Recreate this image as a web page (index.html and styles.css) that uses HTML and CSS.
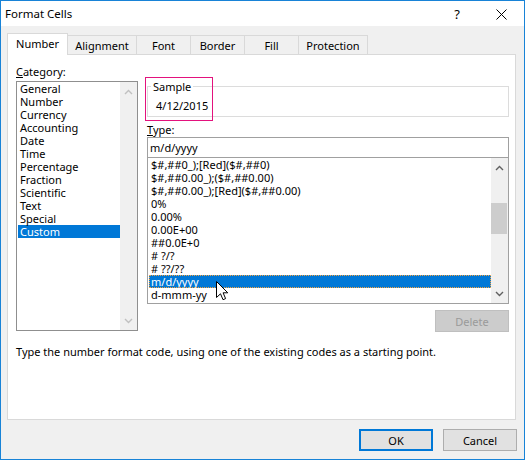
FILE: index.html
```html
<!DOCTYPE html>
<html>
<head>
<meta charset="utf-8">
<title>Format Cells</title>
<link rel="stylesheet" href="styles.css">
</head>
<body>
<div class="window">
  <div class="titlebar">
    <span class="title">Format Cells</span>
    <span class="caption-btn help">?</span>
    <span class="caption-btn close"><svg width="11" height="11" viewBox="0 0 11 11"><path d="M0.5 0.5 L10.5 10.5 M10.5 0.5 L0.5 10.5" stroke="#000" stroke-width="1" fill="none"/></svg></span>
  </div>
  <div class="client">
    <div class="tabs">
      <div class="tab active t-number">Number</div>
      <div class="tab t-align">Alignment</div>
      <div class="tab t-font">Font</div>
      <div class="tab t-border">Border</div>
      <div class="tab t-fill">Fill</div>
      <div class="tab t-prot">Protection</div>
    </div>
    <div class="panel">
      <div class="columns">
        <div class="col-left">
          <div class="label"><u>C</u>ategory:</div>
          <div class="listbox cat">
            <ul class="items">
              <li>General</li>
              <li>Number</li>
              <li>Currency</li>
              <li>Accounting</li>
              <li>Date</li>
              <li>Time</li>
              <li>Percentage</li>
              <li>Fraction</li>
              <li>Scientific</li>
              <li>Text</li>
              <li>Special</li>
              <li class="selected">Custom</li>
            </ul>
            <div class="vscroll disabled">
              <div class="arrow up"><svg width="9" height="6" viewBox="0 0 9 6"><path d="M1 5 L4.5 1.5 L8 5" stroke="currentColor" stroke-width="1.4" fill="none"/></svg></div>
              <div class="spacer"></div>
              <div class="arrow down"><svg width="9" height="6" viewBox="0 0 9 6"><path d="M1 1 L4.5 4.5 L8 1" stroke="currentColor" stroke-width="1.4" fill="none"/></svg></div>
            </div>
          </div>
        </div>
        <div class="col-right">
          <div class="sample-wrap">
            <fieldset class="sample">
              <legend>Sample</legend>
              <div class="sample-value">4/12/2015</div>
            </fieldset>
            <div class="highlight"></div>
          </div>
          <div class="label type-label"><u>T</u>ype:</div>
          <div class="textbox">m/d/yyyy</div>
          <div class="listbox fmt">
            <ul class="items">
              <li>$#,##0_);[Red]($#,##0)</li>
              <li>$#,##0.00_);($#,##0.00)</li>
              <li>$#,##0.00_);[Red]($#,##0.00)</li>
              <li>0%</li>
              <li>0.00%</li>
              <li>0.00E+00</li>
              <li>##0.0E+0</li>
              <li># ?/?</li>
              <li># ??/??</li>
              <li class="selected focus">m/d/yyyy</li>
              <li>d-mmm-yy</li>
            </ul>
            <div class="vscroll">
              <div class="arrow up"><svg width="9" height="6" viewBox="0 0 9 6"><path d="M1 5 L4.5 1.5 L8 5" stroke="currentColor" stroke-width="1.4" fill="none"/></svg></div>
              <div class="thumb"></div>
              <div class="spacer"></div>
              <div class="arrow down"><svg width="9" height="6" viewBox="0 0 9 6"><path d="M1 1 L4.5 4.5 L8 1" stroke="currentColor" stroke-width="1.4" fill="none"/></svg></div>
            </div>
            <svg class="cursor" width="13" height="20" viewBox="0 0 13 20"><path d="M0.5 0.5 L0.5 16.5 L4.5 12.8 L7 18.7 L9.6 17.6 L7.1 11.8 L11.8 11.8 Z" fill="#fff" stroke="#000" stroke-width="1" stroke-linejoin="miter"/></svg>
          </div>
          <div class="delete-row"><button class="btn delete" disabled>Delete</button></div>
        </div>
      </div>
      <p class="desc">Type the number format code, using one of the existing codes as a starting point.</p>
    </div>
    <div class="buttons">
      <button class="btn ok">OK</button>
      <button class="btn cancel">Cancel</button>
    </div>
  </div>
</div>
</body>
</html>
```

FILE: styles.css
```css
html, body {
  margin: 0;
  padding: 0;
  background: #ffffff;
}
body {
  font-family: "Noto Sans", "Open Sans", "DejaVu Sans", sans-serif;
  font-size: 11px;
  color: #000000;
}
.window {
  width: 525px;
  height: 460px;
  box-sizing: border-box;
  border: 1px solid #1883d7;
  background: #f0f0f0;
  display: flex;
  flex-direction: column;
}
.titlebar {
  flex: none;
  height: 25px;
  background: #ffffff;
  display: flex;
  align-items: center;
}
.title {
  flex: 1;
  margin-left: 4px;
  line-height: 25px;
  font-size: 11.5px;
}
.caption-btn {
  width: 46px;
  height: 25px;
  display: flex;
  align-items: center;
  justify-content: center;
}
.help {
  font-size: 13px;
  padding-left: 4px;
  box-sizing: border-box;
}
.close svg {
  display: block;
  margin-top: 2px;
}
.client {
  flex: 1;
  display: flex;
  flex-direction: column;
  padding: 7px 7px 0 6px;
}
.tabs {
  display: flex;
  align-items: flex-end;
  height: 21px;
  position: relative;
  z-index: 1;
}
.tab {
  height: 19px;
  box-sizing: border-box;
  border: 1px solid #d9d9d9;
  border-bottom: none;
  margin-left: -1px;
  background: #f0f0f0;
  display: flex;
  align-items: center;
  justify-content: center;
  padding-top: 1px;
}
.tab.active {
  height: 22px;
  margin-left: 0;
  margin-bottom: -1px;
  background: #ffffff;
  padding-top: 0;
  padding-bottom: 2px;
}
.t-number { width: 61px; }
.t-align { width: 70px; }
.t-font { width: 55px; }
.t-border { width: 55px; }
.t-fill { width: 55px; }
.t-prot { width: 70px; }
.panel {
  width: 509px;
  height: 366px;
  box-sizing: border-box;
  border: 1px solid #d9d9d9;
  background: #ffffff;
  padding: 9px 6px 0 8px;
}
.columns {
  display: flex;
  gap: 9px;
}
.col-left {
  width: 122px;
}
.col-right {
  width: 362px;
}
.label {
  height: 15px;
  line-height: 15px;
}
.listbox {
  box-sizing: border-box;
  border: 1px solid #8f8f8f;
  background: #ffffff;
  display: flex;
  position: relative;
}
.listbox.cat {
  margin-top: 2px;
  height: 250px;
}
.items {
  flex: 1;
  list-style: none;
  margin: 0;
  padding: 0 0 0 1px;
}
.items li {
  height: 13px;
  line-height: 13px;
  padding-left: 2px;
  white-space: nowrap;
}
.items li.selected {
  background: #0078d7;
  color: #ffffff;
}
.items li.focus {
  outline: 1px dotted #f4a340;
  outline-offset: -1px;
}
.vscroll {
  width: 17px;
  background: #f0f0f0;
  display: flex;
  flex-direction: column;
  color: #606060;
}
.vscroll.disabled {
  color: #c0c0c0;
}
.arrow {
  display: flex;
  justify-content: center;
  align-items: center;
}
.arrow svg {
  display: block;
}
.arrow.up {
  height: 20px;
}
.arrow.down {
  height: 18px;
}
.spacer {
  flex: 1;
}
.thumb {
  margin-top: 25px;
  height: 31px;
  width: 16px;
  background: #cdcdcd;
}
.sample-wrap {
  position: relative;
  margin-top: 16px;
}
.sample {
  margin: 0;
  padding: 0 0 3px 3px;
  border: 1px solid #dcdcdc;
  min-width: 0;
}
.sample legend {
  padding: 0 2px;
  line-height: 13px;
}
.sample-value {
  margin-top: 5px;
  padding-left: 5px;
  line-height: 15px;
}
.highlight {
  position: absolute;
  left: -2px;
  top: -3px;
  width: 68px;
  height: 44px;
  box-sizing: border-box;
  border: 1px solid #e3127d;
}
.type-label {
  margin-top: 5px;
}
.textbox {
  height: 21px;
  box-sizing: border-box;
  border: 1px solid #a0a0a0;
  padding-left: 2px;
  line-height: 19px;
}
.listbox.fmt {
  height: 146px;
  border-color: #a0a0a0;
  border-top: none;
}
.cursor {
  position: absolute;
  left: 68px;
  top: 123px;
}
.delete-row {
  display: flex;
  justify-content: flex-end;
  margin-top: 6px;
}
.btn {
  font-family: inherit;
  font-size: 11px;
  width: 74px;
  height: 22px;
  box-sizing: border-box;
  border: 1px solid #adadad;
  background: #e1e1e1;
  color: #000000;
  padding: 0;
  margin: 0;
}
.btn.delete {
  background: #cccccc;
  border-color: #bfbfbf;
  color: #9a9a9a;
}
.btn.ok {
  border: 2px solid #0078d7;
}
.desc {
  margin: 12px 0 0 0;
  line-height: 15px;
  white-space: nowrap;
}
.buttons {
  display: flex;
  justify-content: flex-end;
  gap: 10px;
  margin-top: 9px;
}
```
